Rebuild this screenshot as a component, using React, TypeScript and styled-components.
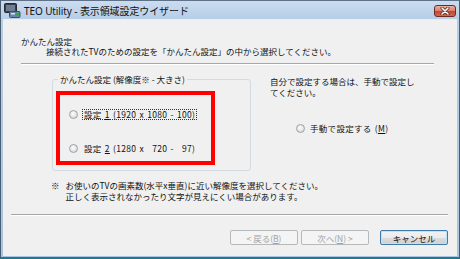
import React from 'react';
import styled, { createGlobalStyle } from 'styled-components';

const Global = createGlobalStyle`
  html, body { margin: 0; padding: 0; }
  body {
    width: 460px; height: 259px; overflow: hidden;
    font-family: "Noto Sans CJK JP", "Noto Sans", sans-serif;
    background: #b9cfe8;
  }
`;

const Window = styled.div`
  width: 460px;
  height: 259px;
  box-sizing: border-box;
  display: flex;
  flex-direction: column;
  background: linear-gradient(180deg, #cadcf0 0px, #b7cee8 18px, #a9c4e0 100%);
  border-left: 1px solid #4b5d70;
  border-right: 1px solid #4b5d70;
  border-top: 1px solid #5f7288;
  border-bottom: 2px solid #1f7b8c;
  padding: 0 2px 1px 2px;
`;

const TitleBar = styled.div`
  height: 18px;
  display: flex;
  align-items: center;
  gap: 3px;
  padding-left: 1px;
  flex: none;
`;

const TitleText = styled.span`
  font-family: "Noto Sans", "Noto Sans CJK JP", sans-serif;
  font-size: 10px;
  color: #111;
  letter-spacing: -0.1px;
  white-space: nowrap;
`;

const Spacer = styled.div`
  flex: 1;
`;

const CloseButton = styled.div`
  width: 22px;
  height: 12px;
  box-sizing: border-box;
  margin-right: 1px;
  margin-top: 1px;
  border: 1px solid #6e2b22;
  border-radius: 3px;
  background: linear-gradient(180deg, #eab2a4 0%, #d9826c 45%, #c24a33 55%, #d8664a 100%);
  display: flex;
  align-items: center;
  justify-content: center;
`;

const Content = styled.div`
  flex: 1;
  background: #f0f0f0;
  border-top: 1px solid #e6eef7;
  display: flex;
  flex-direction: column;
  color: #111;
  font-size: 8.5px;
  line-height: 10px;
`;

const Header = styled.div`
  padding: 16px 0 0 18px;
`;

const Heading = styled.div`
  white-space: nowrap;
`;

const SubText = styled.div`
  padding-left: 25px;
  white-space: nowrap;
`;

const Separator = styled.div<{ $ml: number; $mr: number; $mt: number }>`
  margin: ${p => p.$mt}px ${p => p.$mr}px 0 ${p => p.$ml}px;
  height: 0;
  border-top: 1px solid #a7a7a7;
  border-bottom: 1px solid #ffffff;
`;

const MainRow = styled.div`
  display: flex;
  margin: 9px 0 0 49px;
  gap: 19px;
`;

const GroupBox = styled.fieldset`
  margin: 0;
  width: 199px;
  box-sizing: border-box;
  border: 1px solid #d3dbe2;
  border-radius: 3px;
  padding: 7px 0 5px 3px;
`;

const GroupLegend = styled.legend`
  padding: 0 2px;
  margin-left: 2px;
  white-space: nowrap;
  line-height: 10px;
`;

const Highlight = styled.div`
  width: 159px;
  box-sizing: border-box;
  border: 4px solid #ff0000;
  padding: 14px 0 8px 9px;
  display: flex;
  flex-direction: column;
  gap: 24px;
`;

const RadioRow = styled.div`
  display: flex;
  align-items: center;
  gap: 4px;
  height: 10px;
  white-space: nowrap;
`;

const RadioDot = styled.span`
  width: 9px;
  height: 9px;
  box-sizing: border-box;
  border-radius: 50%;
  border: 1px solid #9ba3aa;
  background: radial-gradient(circle at 45% 40%, #ffffff 0%, #e9e9e9 45%, #c9cdd1 100%);
  flex: none;
`;

const RadioLabel = styled.span<{ $focused?: boolean }>`
  padding: 0 1px;
  border: 1px dotted ${p => (p.$focused ? '#333' : 'transparent')};
  line-height: 9px;
  letter-spacing: 0.3px;
  word-spacing: 1px;
`;

const RightPanel = styled.div`
  padding-top: 2px;
  display: flex;
  flex-direction: column;
`;

const RightText = styled.div`
  white-space: nowrap;
  line-height: 11px;
`;

const ManualRow = styled(RadioRow)`
  margin: 25px 0 0 26px;
  gap: 3px;
`;

const Note = styled.div`
  display: flex;
  margin: 9px 0 0 48px;
  gap: 6px;
  line-height: 11px;
`;

const NoteMark = styled.span`
  flex: none;
`;

const NoteLines = styled.div`
  white-space: nowrap;
`;

const ButtonRow = styled.div`
  display: flex;
  justify-content: flex-end;
  margin: 14px 9px 0 0;
`;

const Button = styled.div<{ $disabled?: boolean; $default?: boolean; $gap?: number }>`
  width: 68px;
  height: 15px;
  box-sizing: border-box;
  margin-left: ${p => p.$gap ?? 0}px;
  border-radius: 2px;
  border: 1px solid ${p => (p.$disabled ? '#b5b9bc' : p.$default ? '#3d7bad' : '#707070')};
  background: ${p =>
    p.$disabled
      ? '#f4f4f4'
      : 'linear-gradient(180deg, #f2f2f2 0%, #ebebeb 50%, #dddddd 51%, #cfcfcf 100%)'};
  box-shadow: ${p => (p.$default ? 'inset 0 0 0 1px #b9e3f8' : 'none')};
  color: ${p => (p.$disabled ? '#a3a3a3' : '#111')};
  display: flex;
  align-items: center;
  justify-content: center;
  font-size: 8.5px;
  line-height: 10px;
  white-space: nowrap;
`;

const AppIcon = () => (
  <svg width="17" height="15" viewBox="0 0 17 15">
    <rect x="0.5" y="0.5" width="12" height="9" rx="1" fill="#3b3f45" stroke="#25282c" />
    <rect x="2" y="2" width="9" height="6" fill="#6f7f93" />
    <rect x="5" y="9.5" width="3" height="2" fill="#50555c" />
    <rect x="5.5" y="8.5" width="10.5" height="6" rx="1" fill="#6b87a8" stroke="#3a4e66" />
    <rect x="7" y="10" width="4" height="1.5" fill="#d7e3ef" />
    <path d="M11 11.5 H14 M12.8 10.2 L14.2 11.5 L12.8 12.8" stroke="#2fae3c" strokeWidth="1.3" fill="none" />
  </svg>
);

const CloseGlyph = () => (
  <svg width="10" height="8" viewBox="0 0 10 8">
    <path d="M2 1 L8 7 M8 1 L2 7" stroke="#5a1d14" strokeWidth="3" strokeLinecap="round" />
    <path d="M2 1 L8 7 M8 1 L2 7" stroke="#ffffff" strokeWidth="1.6" strokeLinecap="round" />
  </svg>
);

export default function App() {
  return (
    <>
      <Global />
      <Window>
        <TitleBar>
          <AppIcon />
          <TitleText>TEO Utility - 表示領域設定ウイザード</TitleText>
          <Spacer />
          <CloseButton>
            <CloseGlyph />
          </CloseButton>
        </TitleBar>
        <Content>
          <Header>
            <Heading>かんたん設定</Heading>
            <SubText>接続されたTVのための設定を「かんたん設定」の中から選択してください。</SubText>
          </Header>
          <Separator $ml={18} $mr={23} $mt={7} />
          <MainRow>
            <GroupBox>
              <GroupLegend>かんたん設定 (解像度※ - 大きさ)</GroupLegend>
              <Highlight>
                <RadioRow>
                  <RadioDot />
                  <RadioLabel $focused>
                    設定 <u>1</u> (1920 x 1080 - 100)
                  </RadioLabel>
                </RadioRow>
                <RadioRow>
                  <RadioDot />
                  <RadioLabel>
                    設定 <u>2</u> (1280 x {'\u2007'}720 - {'\u2007'}97)
                  </RadioLabel>
                </RadioRow>
              </Highlight>
            </GroupBox>
            <RightPanel>
              <RightText>
                自分で設定する場合は、手動で設定し
                <br />
                てください。
              </RightText>
              <ManualRow>
                <RadioDot />
                <RadioLabel>
                  手動で設定する (<u>M</u>)
                </RadioLabel>
              </ManualRow>
            </RightPanel>
          </MainRow>
          <Note>
            <NoteMark>※</NoteMark>
            <NoteLines>
              お使いのTVの画素数(水平x垂直)に近い解像度を選択してください。
              <br />
              正しく表示されなかったり文字が見えにくい場合があります。
            </NoteLines>
          </Note>
          <Separator $ml={8} $mr={9} $mt={12} />
          <ButtonRow>
            <Button $disabled>
              &lt; 戻る(<u>B</u>)
            </Button>
            <Button $disabled $gap={3}>
              次へ(<u>N</u>) &gt;
            </Button>
            <Button $default $gap={11}>
              キャンセル
            </Button>
          </ButtonRow>
        </Content>
      </Window>
    </>
  );
}
